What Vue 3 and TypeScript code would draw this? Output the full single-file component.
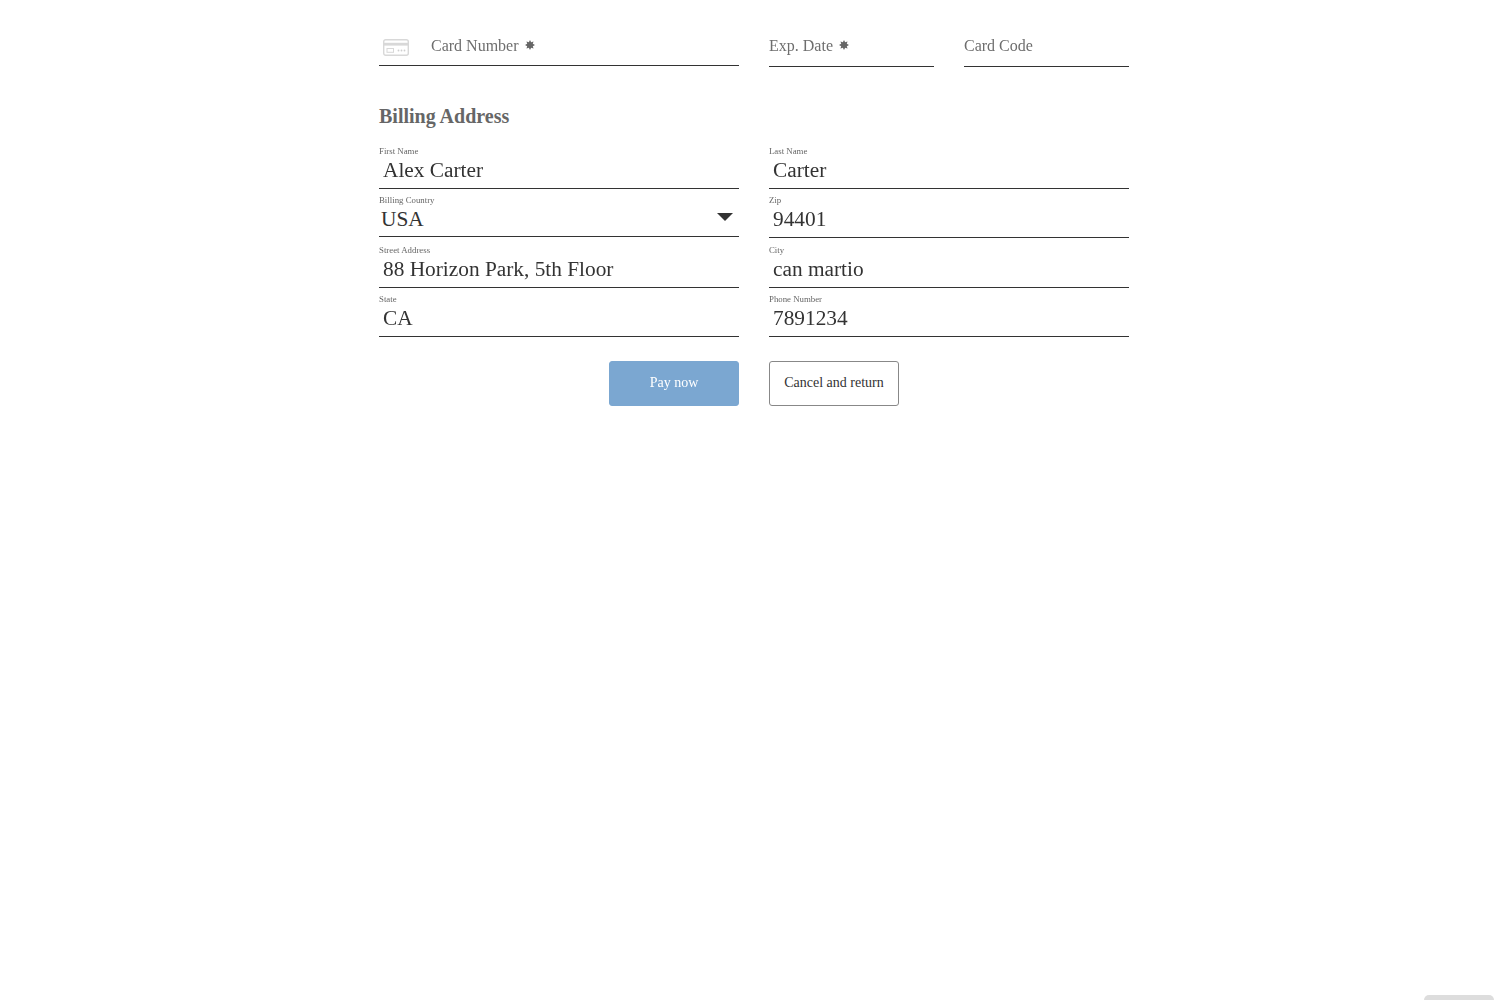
<script setup lang="ts">
interface Field { label: string; value: string; select?: boolean }
const fields: Field[] = [
  { label: 'First Name', value: 'Alex Carter' },
  { label: 'Last Name', value: 'Carter' },
  { label: 'Billing Country', value: 'USA', select: true },
  { label: 'Zip', value: '94401' },
  { label: 'Street Address', value: '88 Horizon Park, 5th Floor' },
  { label: 'City', value: 'can martio' },
  { label: 'State', value: 'CA' },
  { label: 'Phone Number', value: '7891234' },
]
const starPoints: string = Array.from({ length: 16 }, (_, i) => {
  const r = i % 2 === 0 ? 5 : 3
  const a = (i * Math.PI) / 8
  return `${(5 + r * Math.sin(a)).toFixed(2)},${(5 - r * Math.cos(a)).toFixed(2)}`
}).join(' ')
</script>

<template>
  <main class="page">
    <section class="card-row">
      <div class="card-number">
        <svg class="card-icon" width="26" height="17" viewBox="0 0 26 17" fill="none">
          <rect x="0.7" y="0.7" width="24.6" height="15.6" rx="2" stroke="#d8d8d8" stroke-width="1.4" />
          <rect x="0.7" y="3.8" width="24.6" height="2.8" fill="#d8d8d8" />
          <rect x="4" y="9.5" width="6.5" height="3.8" stroke="#d8d8d8" stroke-width="1" />
          <circle cx="15.5" cy="11.5" r="0.9" fill="#cfcfcf" />
          <circle cx="18.5" cy="11.5" r="0.9" fill="#cfcfcf" />
          <circle cx="21.5" cy="11.5" r="0.9" fill="#cfcfcf" />
        </svg>
        <span class="placeholder">Card Number</span>
        <svg class="req" width="10" height="10" viewBox="0 0 10 10"><polygon :points="starPoints" fill="#666" /></svg>
      </div>
      <div class="card-side">
        <div class="card-small">
          <span class="placeholder">Exp. Date</span>
          <svg class="req" width="10" height="10" viewBox="0 0 10 10"><polygon :points="starPoints" fill="#666" /></svg>
        </div>
        <div class="card-small">
          <span class="placeholder">Card Code</span>
        </div>
      </div>
    </section>

    <h2 class="heading">Billing Address</h2>

    <section class="fields">
      <div v-for="f in fields" :key="f.label" class="field" :class="{ 'field-select': f.select }">
        <div class="label">{{ f.label }}</div>
        <div class="value" :class="{ 'value-select': f.select, 'value-input': !f.select }">
          <span>{{ f.value }}</span>
          <i v-if="f.select" class="caret"></i>
        </div>
      </div>
    </section>

    <section class="actions">
      <div class="action-left"><button class="btn btn-primary" type="button">Pay now</button></div>
      <div><button class="btn btn-plain" type="button">Cancel and return</button></div>
    </section>
  </main>
  <div class="corner-tab"></div>
</template>

<style>
html, body { background: #fff; }
</style>

<style scoped>
.page {
  width: 750px;
  margin: 0 auto;
  padding-top: 26px;
  font-family: "Liberation Serif", serif;
  color: #333;
}
.card-row {
  display: grid;
  grid-template-columns: 360px 360px;
  column-gap: 30px;
  align-items: start;
}
.card-number {
  display: flex;
  align-items: center;
  height: 39px;
  border-bottom: 1px solid #333;
  padding-left: 4px;
}
.card-icon { margin-right: 22px; margin-top: 4px; }
.card-side {
  display: grid;
  grid-template-columns: 165px 165px;
  column-gap: 30px;
}
.card-small {
  display: flex;
  align-items: center;
  height: 40px;
  border-bottom: 1px solid #333;
}
.placeholder {
  font-size: 16px;
  color: #6e6e6e;
  will-change: transform;
}
.req {
  margin-left: 6px;
  margin-top: -2px;
}
.heading {
  margin: 36px 0 0;
  height: 36.6px;
  font-size: 20px;
  line-height: 26px;
  font-weight: 700;
  color: #666;
}
.fields {
  display: grid;
  grid-template-columns: 360px 360px;
  column-gap: 30px;
  grid-auto-rows: 49.33px;
}
.field {
  border-bottom: 1px solid #333;
  box-sizing: border-box;
  padding-top: 6.4px;
}
.field-select { height: 48.5px; }
.label {
  font-size: 8.8px;
  line-height: 10px;
  color: #666;
  will-change: transform;
}
.value {
  font-size: 21.33px;
  line-height: 28px;
  padding-left: 4px;
  color: #333;
}
.value-input { will-change: transform; }
.value-select {
  display: flex;
  justify-content: space-between;
  align-items: center;
  padding-left: 2px;
  padding-right: 6px;
}
.caret {
  width: 0;
  height: 0;
  border-left: 8px solid transparent;
  border-right: 8px solid transparent;
  border-top: 8px solid #333;
  margin-top: -4px;
}
.actions {
  display: grid;
  grid-template-columns: 360px 360px;
  column-gap: 30px;
  margin-top: 24px;
}
.action-left { display: flex; justify-content: flex-end; }
.btn {
  width: 130px;
  height: 45px;
  box-sizing: border-box;
  border-radius: 3px;
  font-family: "Liberation Serif", serif;
  font-size: 14px;
  padding: 0;
}
.btn-primary {
  background: #7ba7d1;
  border: 1px solid #7ba7d1;
  color: #fff;
  padding-bottom: 2px;
  will-change: transform;
}
.btn-plain {
  background: #fff;
  border: 1px solid #888;
  color: #333;
}
.corner-tab {
  position: fixed;
  right: 14px;
  bottom: 0;
  width: 70px;
  height: 5px;
  background: #ddd;
  border-radius: 6px 6px 0 0;
}
</style>
